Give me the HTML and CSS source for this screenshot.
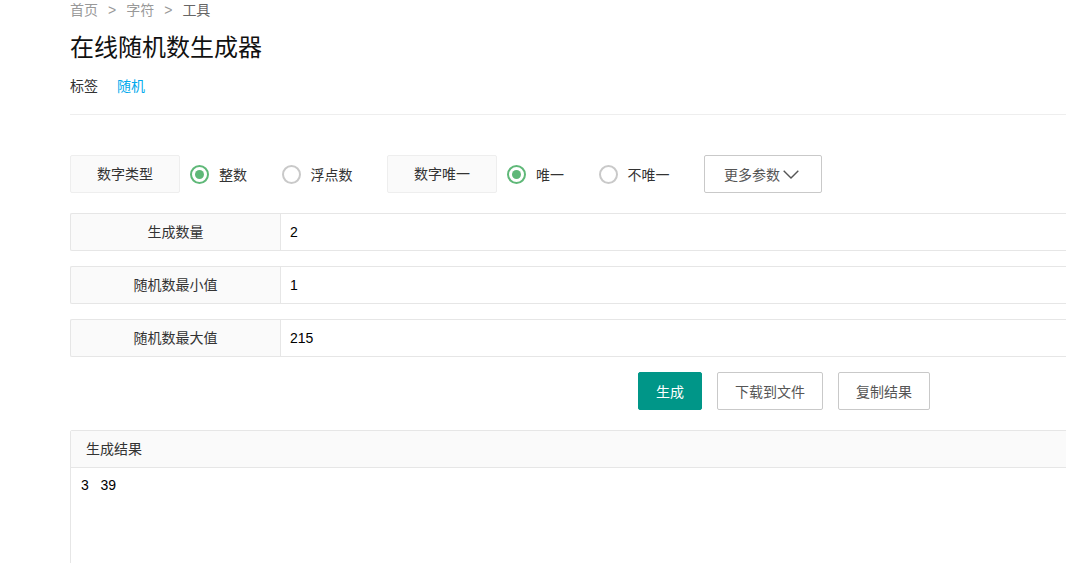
FILE: index.html
```html
<!DOCTYPE html>
<html lang="zh-CN">
<head>
<meta charset="utf-8">
<title>在线随机数生成器</title>
<link rel="stylesheet" href="styles.css">
</head>
<body>
<div class="page">
  <div class="breadcrumb">
    <a class="crumb">首页</a><span class="sep">&gt;</span><a class="crumb">字符</a><span class="sep">&gt;</span><span class="crumb current">工具</span>
  </div>
  <h1 class="title">在线随机数生成器</h1>
  <div class="tags"><span class="tags-label">标签</span><a class="tag">随机</a></div>
  <hr class="divider">

  <div class="opt-row">
    <div class="opt-label">数字类型</div>
    <label class="radio checked"><span class="radio-circle"></span><span>整数</span></label>
    <label class="radio"><span class="radio-circle"></span><span>浮点数</span></label>
    <div class="opt-label">数字唯一</div>
    <label class="radio checked"><span class="radio-circle"></span><span>唯一</span></label>
    <label class="radio"><span class="radio-circle"></span><span>不唯一</span></label>
    <button class="more-btn">更多参数<svg class="chev" width="16" height="9" viewBox="0 0 16 9"><path d="M0.7 0.7 L8 8 L15.3 0.7" fill="none" stroke="#555" stroke-width="1.4"/></svg></button>
  </div>

  <div class="field">
    <div class="field-label">生成数量</div>
    <div class="field-input">2</div>
  </div>
  <div class="field">
    <div class="field-label">随机数最小值</div>
    <div class="field-input">1</div>
  </div>
  <div class="field">
    <div class="field-label">随机数最大值</div>
    <div class="field-input">215</div>
  </div>

  <div class="actions">
    <button class="btn btn-primary">生成</button>
    <button class="btn">下载到文件</button>
    <button class="btn">复制结果</button>
  </div>

  <div class="result">
    <div class="result-head">生成结果</div>
    <div class="result-body">3   39</div>
  </div>
</div>
</body>
</html>
```

FILE: styles.css
```css
html, body {
  margin: 0;
  padding: 0;
  overflow: hidden;
  background: #fff;
}
body {
  font-family: "Liberation Sans", "Noto Sans CJK SC", sans-serif;
  font-size: 14px;
  color: #333;
}
.page {
  padding-left: 70px;
  width: 1430px;
}
.breadcrumb {
  line-height: 20px;
  height: 20px;
  color: #999;
}
.crumb { color: #999; }
.crumb.current { color: #666; }
.sep { margin: 0 10px; color: #999; }
.title {
  margin: 10px 0 0;
  font-size: 24px;
  font-weight: normal;
  line-height: 36px;
  color: #111;
}
.tags {
  margin-top: 10px;
  line-height: 20px;
  display: flex;
  gap: 19px;
}
.tags-label { color: #333; }
.tag { color: #01aaed; }
.divider {
  margin: 18px 0 0;
  border: 0;
  border-top: 1px solid #eee;
  height: 0;
}
.opt-row {
  margin-top: 40px;
  display: flex;
  align-items: center;
  height: 38px;
}
.opt-label {
  box-sizing: border-box;
  width: 110px;
  height: 38px;
  line-height: 36px;
  text-align: center;
  background: #fafafa;
  border: 1px solid #eee;
  border-radius: 2px;
  color: #333;
  margin-right: 10px;
}
.radio {
  display: flex;
  align-items: center;
  gap: 10px;
  margin: 0 34.5px 0 0;
  color: #333;
}
.radio-circle {
  box-sizing: border-box;
  width: 19px;
  height: 19px;
  border-radius: 50%;
  border: 2px solid #c9c9c9;
  display: flex;
  align-items: center;
  justify-content: center;
}
.radio.checked .radio-circle { border-color: #5fb878; }
.radio.checked .radio-circle::after {
  content: "";
  width: 9px;
  height: 9px;
  border-radius: 50%;
  background: #5fb878;
}
.more-btn {
  box-sizing: border-box;
  height: 38px;
  padding: 0 22px 0 19px;
  border: 1px solid #c9c9c9;
  border-radius: 2px;
  background: #fff;
  color: #555;
  font: inherit;
  display: flex;
  align-items: center;
}
.chev { margin-left: 3px; }
.field {
  margin-top: 20px;
  display: flex;
  height: 38px;
}
.field + .field { margin-top: 15px; }
.field-label {
  box-sizing: border-box;
  width: 210px;
  height: 38px;
  line-height: 36px;
  text-align: center;
  background: #fafafa;
  border: 1px solid #e6e6e6;
  border-right: 0;
  border-radius: 2px 0 0 2px;
  color: #333;
}
.field-input {
  flex: 1;
  box-sizing: border-box;
  height: 38px;
  line-height: 36px;
  padding-left: 9px;
  border: 1px solid #e6e6e6;
  color: #000;
}
.actions {
  margin-top: 15px;
  display: flex;
  gap: 15px;
  padding-left: 568px;
}
.btn {
  box-sizing: border-box;
  height: 38px;
  padding: 0 17px;
  border: 1px solid #c9c9c9;
  border-radius: 2px;
  background: #fff;
  color: #555;
  font: inherit;
}
.btn-primary {
  background: #009688;
  border-color: #009688;
  color: #fff;
}
.result {
  margin-top: 20px;
  border: 1px solid #e6e6e6;
  border-radius: 2px;
}
.result-head {
  height: 36px;
  line-height: 36px;
  padding-left: 15px;
  background: #fafafa;
  border-bottom: 1px solid #e6e6e6;
  color: #333;
}
.result-body {
  padding: 7px 10px;
  line-height: 20px;
  min-height: 200px;
  white-space: pre;
  color: #000;
}
```
